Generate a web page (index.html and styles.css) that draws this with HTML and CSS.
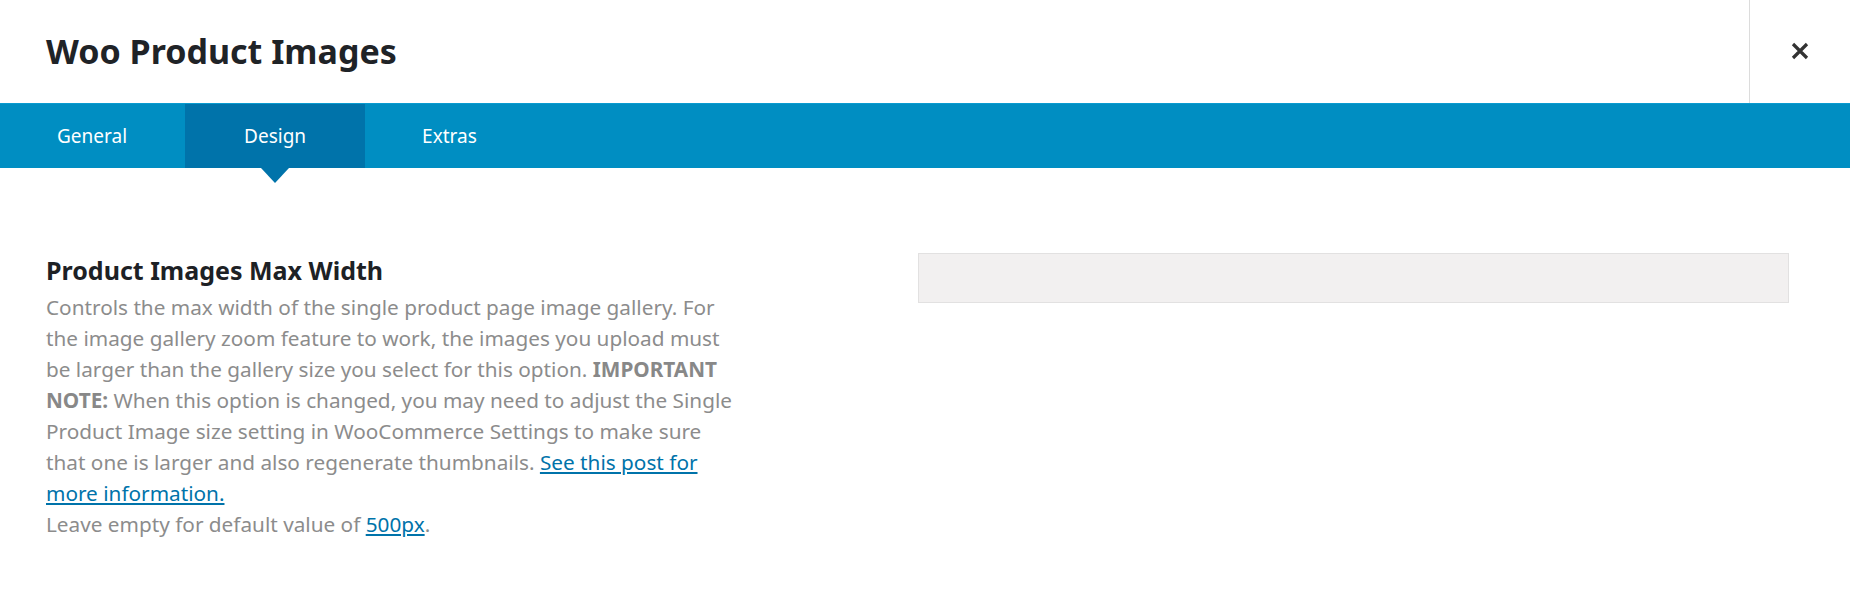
FILE: index.html
```html
<!DOCTYPE html>
<html lang="en">
<head>
<meta charset="utf-8">
<title>Woo Product Images</title>
<link rel="stylesheet" href="styles.css">
</head>
<body>
<div class="lightbox">
  <header class="lb-header">
    <h1 class="lb-title">Woo Product Images</h1>
    <button class="lb-close" aria-label="Close">
      <svg width="18" height="18" viewBox="0 0 18 18"><path d="M2 2 L16 16 M16 2 L2 16" stroke="#333" stroke-width="3.2" stroke-linecap="butt" fill="none"/></svg>
    </button>
  </header>
  <nav class="lb-tabs">
    <a class="lb-tab">General</a>
    <a class="lb-tab is-active">Design</a>
    <a class="lb-tab">Extras</a>
  </nav>
  <main class="lb-content">
    <div class="field">
      <div class="field-label">
        <h2 class="field-title">Product Images Max Width</h2>
        <p class="field-desc">Controls the max width of the single product page image gallery. For the image gallery zoom feature to work, the images you upload must be larger than the gallery size you select for this option. <strong>IMPORTANT NOTE:</strong> When this option is changed, you may need to adjust the Single Product Image size setting in WooCommerce Settings to make sure that one is larger and also regenerate thumbnails. <a href="#">See this post for more information.</a><br>Leave empty for default value of <a href="#">500px</a>.</p>
      </div>
      <div class="field-control">
        <input class="text-input" type="text">
      </div>
    </div>
  </main>
</div>
</body>
</html>
```
FILE: styles.css
```css
* { box-sizing: border-box; }
html, body { margin: 0; padding: 0; background: #fff; }
body { font-family: "Noto Sans", "Open Sans", sans-serif; }

.lb-header {
  display: flex;
  align-items: stretch;
  height: 103px;
}
.lb-title {
  flex: 1;
  margin: 0;
  padding-left: 46px;
  font-size: 34px;
  font-weight: 700;
  color: #1f2327;
  display: flex;
  align-items: center;
  padding-bottom: 2px;
}
.lb-close {
  width: 101px;
  border: 0;
  border-left: 1px solid #dcdcdc;
  background: #fff;
  display: flex;
  align-items: center;
  justify-content: center;
  padding: 0;
  padding-bottom: 1px;
}

.lb-tabs {
  display: flex;
  height: 65px;
  background: #008ec2;
  border-top: 1px solid #0a9bd0;
}
.lb-tab {
  position: relative;
  display: flex;
  align-items: center;
  padding: 0 58px 0 57px;
  color: #fff;
  font-size: 19px;
  text-decoration: none;
}
.lb-tab.is-active { background: #0073aa; padding: 0 59px; }
.lb-tab.is-active::after {
  content: "";
  position: absolute;
  left: 50%;
  bottom: -15px;
  margin-left: -14px;
  border-top: 15px solid #0073aa;
  border-left: 14px solid transparent;
  border-right: 14px solid transparent;
}

.lb-content {
  padding: 86px 61px 0 46px;
}
.field {
  display: grid;
  grid-template-columns: 1fr 1fr;
  align-items: start;
}
.field-title {
  margin: 0 0 6px;
  font-size: 25px;
  line-height: 32px;
  font-weight: 700;
  color: #1d2125;
}
.field-desc {
  margin: 0;
  max-width: 690px;
  font-size: 20.75px;
  line-height: 31px;
  color: #8c8c8c;
}
.field-desc strong { font-weight: 700; color: #888; }
.field-desc a { color: #0073aa; text-decoration: underline; }

.field-control { padding-top: 0; }
.text-input {
  display: block;
  width: 100%;
  height: 50px;
  margin-top: -1px;
  background: #f2f0f0;
  border: 1px solid #e2e1e1;
  border-radius: 0;
  font: inherit;
}
```
